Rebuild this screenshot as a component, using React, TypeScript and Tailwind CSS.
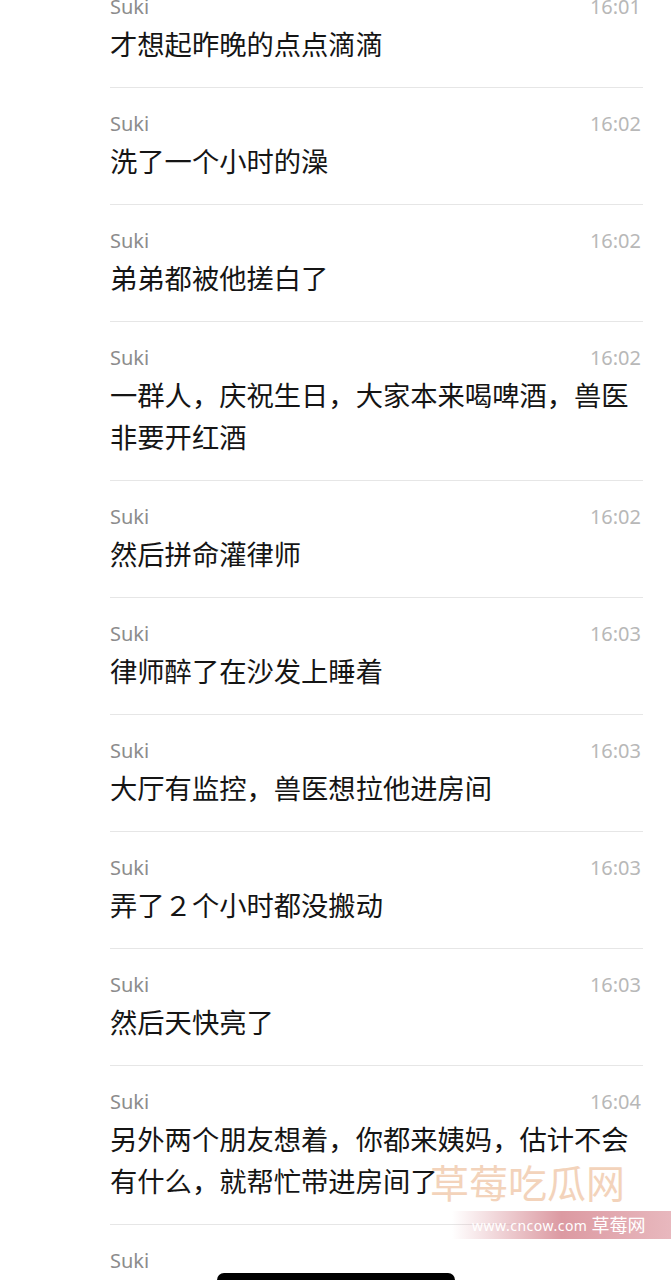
import React from "react";

type Msg = { time: string; text: string };

const messages: Msg[] = [
  { time: "16:01", text: "才想起昨晚的点点滴滴" },
  { time: "16:02", text: "洗了一个小时的澡" },
  { time: "16:02", text: "弟弟都被他搓白了" },
  { time: "16:02", text: "一群人，庆祝生日，大家本来喝啤酒，兽医非要开红酒" },
  { time: "16:02", text: "然后拼命灌律师" },
  { time: "16:03", text: "律师醉了在沙发上睡着" },
  { time: "16:03", text: "大厅有监控，兽医想拉他进房间" },
  { time: "16:03", text: "弄了２个小时都没搬动" },
  { time: "16:03", text: "然后天快亮了" },
  { time: "16:04", text: "另外两个朋友想着，你都来姨妈，估计不会有什么，就帮忙带进房间了" },
  { time: "", text: "" },
];

const font = {
  fontFamily: '"Noto Sans", "Noto Sans CJK SC", sans-serif',
};

function Row({ msg }: { msg: Msg }) {
  return (
    <div className="border-b border-[#e6e6e6] pt-[24px] pb-[21px] mr-[28px]">
      <div className="flex items-center justify-between h-[24px]">
        <span className="text-[20px] text-[#8c8c8c]">Suki</span>
        <span className="text-[20px] text-[#b8b8b8] pr-[2px]">{msg.time}</span>
      </div>
      <p className="mt-[5px] text-[27.3px] leading-[42px] text-[#151515] pr-[4px]">
        {msg.text}
      </p>
    </div>
  );
}

export default function App() {
  return (
    <div
      className="relative w-[671px] h-[1280px] overflow-hidden bg-white"
      style={font}
    >
      <div className="mt-[-29px] pl-[110px] flex flex-col">
        {messages.map((m, i) => (
          <Row key={i} msg={m} />
        ))}
      </div>

      {/* watermark */}
      <div className="absolute left-[430px] top-[1159px] text-[39px] leading-[48px] text-[#f2cfb4] opacity-90">
        草莓吃瓜网
      </div>
      <div className="absolute left-[452px] top-[1211px] w-[219px] h-[28px] flex items-center bg-gradient-to-r from-transparent via-[#dc9aa2] to-[#e8b8be]">
        <span className="ml-[20px] text-[14px] text-white tracking-[0.5px]">
          www.cncow.com
        </span>
        <span className="ml-[4px] text-[18px] text-white">草莓网</span>
      </div>

      {/* home indicator */}
      <div className="absolute left-[217px] top-[1273px] w-[238px] h-[14px] rounded-full bg-black" />
    </div>
  );
}
